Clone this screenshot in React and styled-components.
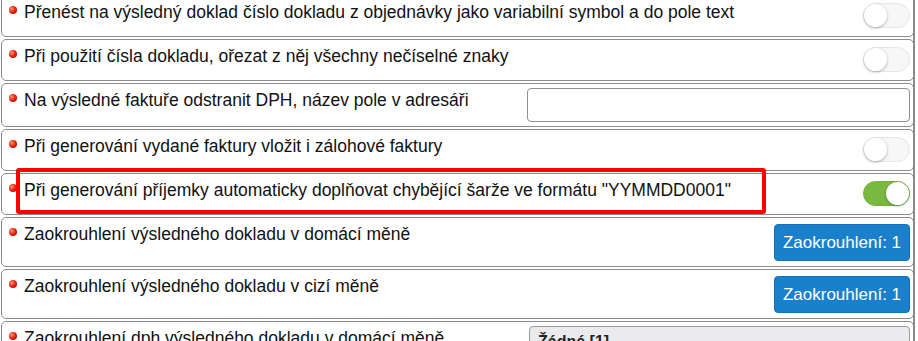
import { createGlobalStyle, styled } from 'styled-components';

const GlobalStyle = createGlobalStyle`
  html, body {
    margin: 0;
    padding: 0;
    background: #fff;
    overflow: hidden;
  }
  body {
    font-family: "Liberation Sans", Arial, sans-serif;
    color: #111;
  }
`;

// settings rows
const settings = [
  { id: 1, text: 'Přenést na výsledný doklad číslo dokladu z objednávky jako variabilní symbol a do pole text', kind: 'toggle', on: false },
  { id: 2, text: 'Při použití čísla dokladu, ořezat z něj všechny nečíselné znaky', kind: 'toggle', on: false },
  { id: 3, text: 'Na výsledné faktuře odstranit DPH, název pole v adresáři', kind: 'input' },
  { id: 4, text: 'Při generování vydané faktury vložit i zálohové faktury', kind: 'toggle', on: false },
  { id: 5, text: 'Při generování příjemky automaticky doplňovat chybějící šarže ve formátu "YYMMDD0001"', kind: 'toggle', on: true, marked: true },
  { id: 6, text: 'Zaokrouhlení výsledného dokladu v domácí měně', kind: 'button' },
  { id: 7, text: 'Zaokrouhlení výsledného dokladu v cizí měně', kind: 'button' },
  { id: 8, text: 'Zaokrouhlení dph výsledného dokladu v domácí měně', kind: 'select' },
];

const App = () => {
  return (
    <>
      <GlobalStyle />
      <Panel>
        <List>
          {settings.map(s => (
            <Row key={s.id} $tall={s.kind === 'button'}>
              <Label>
                <Bullet />
                <span>{s.text}</span>
              </Label>
              {s.kind === 'toggle' && (
                <Toggle $on={s.on}>
                  <Knob $on={s.on} />
                </Toggle>
              )}
              {s.kind === 'input' && <TextInput type="text" />}
              {s.kind === 'button' && <RoundButton>Zaokrouhlení: 1</RoundButton>}
              {s.kind === 'select' && <SelectBox>Žádné [1]</SelectBox>}
              {s.marked && <Marker />}
            </Row>
          ))}
        </List>
      </Panel>
    </>
  );
};

export default App;

const Panel = styled.div`
  width: 915px;
  height: 341px;
  padding-left: 1px;
  box-sizing: border-box;
  border-right: 2px solid #8a8a8a;
  overflow: hidden;
`;

const List = styled.div`
  display: flex;
  flex-direction: column;
  gap: 2px;
  margin-top: -5px;
`;

const Row = styled.div`
  position: relative;
  display: flex;
  align-items: flex-start;
  justify-content: space-between;
  box-sizing: border-box;
  width: 913px;
  min-height: ${p => (p.$tall ? '50px' : '42px')};
  padding: 4px 3px 4px 7px;
  border: 1px solid #8b8b8b;
  border-radius: 5px;
  background: #fff;
`;

const Label = styled.div`
  display: flex;
  align-items: flex-start;
  flex: 1;
  margin-top: 1px;
  font-size: 17.5px;
  line-height: 22px;
  color: #111;
  white-space: nowrap;
`;

const Bullet = styled.span`
  flex: 0 0 8px;
  width: 8px;
  height: 8px;
  margin: 5px 7px 0 0;
  border-radius: 50%;
  background: radial-gradient(circle at 35% 35%, #ff9a80 0%, #e8250c 45%, #a80000 100%);
`;

const Toggle = styled.div`
  position: relative;
  flex: 0 0 47px;
  width: 47px;
  height: 25px;
  margin-top: 3px;
  box-sizing: border-box;
  border-radius: 13px;
  border: 1px solid ${p => (p.$on ? '#72b23a' : '#e6e6e6')};
  background: ${p => (p.$on ? '#79b942' : '#f7f7f7')};
`;

const Knob = styled.span`
  position: absolute;
  top: 0;
  left: ${p => (p.$on ? '22px' : '0')};
  width: 23px;
  height: 23px;
  border-radius: 50%;
  background: #fff;
  box-shadow: 0 1px 3px rgba(0, 0, 0, 0.3);
`;

const TextInput = styled.input`
  flex: 0 0 383px;
  width: 383px;
  height: 34px;
  box-sizing: border-box;
  border: 1px solid #8e8e96;
  border-radius: 4px;
  background: #fff;
  outline: none;
`;

const RoundButton = styled.button`
  flex: 0 0 136px;
  width: 136px;
  height: 37px;
  margin-top: 2px;
  border: 1px solid #1670b5;
  border-radius: 4px;
  background: #1b80cc;
  color: #fff;
  font-family: "Liberation Sans", Arial, sans-serif;
  font-size: 17px;
  padding: 0;
`;

const SelectBox = styled.div`
  flex: 0 0 381px;
  width: 381px;
  height: 34px;
  box-sizing: border-box;
  padding: 6px 8px;
  border: 1px solid #9a9a9a;
  border-radius: 4px;
  background: #ebebed;
  font-size: 16px;
  font-weight: bold;
  color: #222;
`;

// red annotation drawn over the highlighted row
const Marker = styled.div`
  position: absolute;
  left: 14px;
  top: -6px;
  width: 750px;
  height: 46px;
  box-sizing: border-box;
  border: 4px solid #ff0000;
  border-radius: 3px;
  pointer-events: none;
`;
